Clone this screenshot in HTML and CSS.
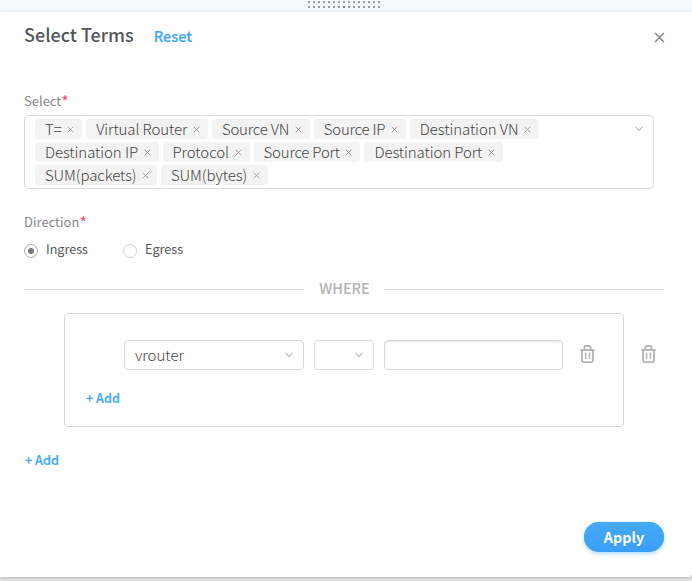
FILE: index.html
```html
<!DOCTYPE html>
<html lang="en">
<head>
<meta charset="utf-8">
<title>Select Terms</title>
<link rel="stylesheet" href="styles.css">
</head>
<body>
<svg class="defs" width="0" height="0" aria-hidden="true">
  <symbol id="x" viewBox="0 0 10 10"><path d="M1 1L9 9M9 1L1 9" fill="none" stroke="currentColor" stroke-width="1.3"/></symbol>
  <symbol id="chev" viewBox="0 0 8 6"><path d="M.7 .8L4 4.7L7.3 .8" fill="none" stroke="currentColor" stroke-width="1.1"/></symbol>
  <symbol id="trash" viewBox="0 0 15 18"><path d="M.3 5H14.7M4.5 4.6V2Q4.5 1 5.5 1H9.5Q10.5 1 10.5 2V4.6M2 5V15.3Q2 17.1 3.7 17.1H11.3Q13 17.1 13 15.3V5" fill="none" stroke="currentColor" stroke-width="1.9"/><path d="M5.6 7.5V14M9.4 7.5V14" fill="none" stroke="currentColor" stroke-width="1.5"/></symbol>
</svg>
<div class="strip"><div class="grip"></div></div>
<main class="modal">
  <header class="head">
    <h1 class="title">Select Terms</h1>
    <a class="reset">Reset</a>
    <svg class="close"><use href="#x"/></svg>
  </header>
  <label class="label select-label">Select<span class="req">*</span></label>
  <div class="multi">
    <div class="tags">
      <div class="row"><span class="tag">T=<svg><use href="#x"/></svg></span><span class="tag">Virtual Router<svg><use href="#x"/></svg></span><span class="tag tight">Source VN<svg><use href="#x"/></svg></span><span class="tag tight">Source IP<svg><use href="#x"/></svg></span><span class="tag">Destination VN<svg><use href="#x"/></svg></span></div>
      <div class="row"><span class="tag">Destination IP<svg><use href="#x"/></svg></span><span class="tag">Protocol<svg><use href="#x"/></svg></span><span class="tag tight">Source Port<svg><use href="#x"/></svg></span><span class="tag">Destination Port<svg><use href="#x"/></svg></span></div>
      <div class="row"><span class="tag">SUM(packets)<svg><use href="#x"/></svg></span><span class="tag">SUM(bytes)<svg><use href="#x"/></svg></span></div>
    </div>
    <svg class="chev"><use href="#chev"/></svg>
  </div>
  <label class="label dir-label">Direction<span class="req">*</span></label>
  <div class="radios">
    <span class="radio on"></span><span class="radio-text first">Ingress</span>
    <span class="radio"></span><span class="radio-text">Egress</span>
  </div>
  <div class="divider"><span>WHERE</span></div>
  <div class="group-line">
    <section class="group">
      <div class="fields">
        <div class="field key"><span>vrouter</span><svg class="chev"><use href="#chev"/></svg></div>
        <div class="field op"><svg class="chev"><use href="#chev"/></svg></div>
        <div class="field value"></div>
        <svg class="trash"><use href="#trash"/></svg>
      </div>
      <a class="add">+ Add</a>
    </section>
    <svg class="trash outer"><use href="#trash"/></svg>
  </div>
  <a class="add add-outer">+ Add</a>
  <footer class="foot"><button class="apply">Apply</button></footer>
</main>
</body>
</html>
```
FILE: styles.css
```css
* { box-sizing: border-box; }
body { margin: 0; width: 692px; height: 581px; overflow: hidden; background: #e7e7e7; color: #54565a; font-family: "Source Sans Pro", "Noto Sans CJK SC", "Open Sans", sans-serif; font-size: 13px; }
svg { display: block; flex: none; }
.defs { position: absolute; }
.strip { height: 12px; background: #f4faff; display: flex; justify-content: center; padding: 1px 4px 0 0; }
.grip { width: 72px; height: 8px; background: repeating-linear-gradient(90deg, #999 0 2px, transparent 2px 5px) 0 0 / 100% 2px no-repeat, repeating-linear-gradient(90deg, #999 0 2px, transparent 2px 5px) 0 5px / 100% 2px no-repeat; }
.modal { height: 565px; background: #fff; padding: 0 28px 0 24px; border-bottom-right-radius: 4px; box-shadow: 0 1px 4px rgba(0,0,0,.2); display: flex; flex-direction: column; }
.head { display: flex; align-items: center; height: 45px; flex: none; }
.title { margin: -1px 0 0; font-size: 18px; font-weight: 500; line-height: 24px; }
.reset { margin: 3px 0 0 20px; font-size: 14.5px; font-weight: 500; line-height: 20px; color: #3fa6fb; -webkit-text-stroke: .2px; }
.close { width: 11px; height: 11px; margin: 5px -1px 0 auto; color: #858585; }
.label { color: #85878b; font-size: 13px; line-height: 18px; height: 18px; flex: none; display: flex; }
.select-label { margin-top: 35px; }
.req { color: #fa4d6b; font-size: 16px; }
.multi { width: 630px; height: 74px; margin-top: 5px; border: 1px solid #d9d9d9; border-radius: 4px; padding: 3px 10px; display: flex; justify-content: space-between; flex: none; }
.row { display: flex; gap: 4px; height: 23px; }
.tag { height: 20px; padding: 0 8px 0 10px; border-radius: 4px; background: #f3f3f3; color: #444; font-size: 15px; font-weight: 300; line-height: 20px; letter-spacing: -.08px; display: flex; white-space: nowrap; }
.tight { letter-spacing: -.2px; }
.tag svg { width: 7px; height: 7px; margin: 6.5px 0 0 5.5px; color: #999; }
.chev { width: 8px; height: 6px; color: #bbb; }
.multi .chev { margin-top: 7px; }
.dir-label { margin-top: 24px; }
.radios { display: flex; align-items: center; height: 20px; margin-top: 9px; flex: none; }
.radio { width: 14px; height: 14px; border: 1px solid #d2d2d2; border-radius: 50%; margin-top: 2px; }
.radio.on { border-color: #aaa; background: radial-gradient(circle, #777a7e 0 2.7px, transparent 3.3px); }
.radio-text { margin: -2px 0 0 8px; line-height: 20px; font-size: 12.6px; }
.first { margin-right: 35px; }
.divider { display: flex; align-items: center; height: 20px; width: 640px; margin-top: 18px; color: #b2b4b5; font-size: 14.5px; font-weight: 500; line-height: 20px; flex: none; }
.divider span { width: 80px; padding-left: 1px; text-align: center; }
.divider::before, .divider::after { content: ""; height: 1px; background: #d9d9d9; flex: 1; margin-top: 2px; }
.group-line { display: flex; margin: 15px 0 0 40px; flex: none; }
.group { width: 560px; height: 114px; border: 1px solid #d9d9d9; border-radius: 4px; padding: 26px 0 0 59px; }
.fields { display: flex; gap: 10px; height: 30px; }
.field { border: 1px solid #d9d9d9; border-radius: 4px; height: 30px; display: flex; justify-content: space-between; align-items: center; padding: 0 10px; color: #444; font-size: 15px; font-weight: 300; line-height: 28px; }
.key { width: 180px; }
.op { width: 60px; justify-content: flex-end; }
.value { width: 179px; box-shadow: inset 0 1px 2px rgba(0,0,0,.1); }
.trash { width: 15px; height: 18px; color: #b7b7b7; margin: 5px 0 0 7px; }
.outer { margin: 32px 0 0 17px; }
.add { display: block; color: #3fa6fb; font-size: 12.7px; font-weight: 500; line-height: 20px; height: 20px; flex: none; -webkit-text-stroke: .2px; }
.group .add { margin: 18px 0 0 -38px; }
.add-outer { margin: 23px 0 0 1px; }
.foot { margin-top: 52px; display: flex; justify-content: flex-end; flex: none; }
.apply { width: 80px; height: 30px; border: 0; border-radius: 15px; background: linear-gradient(#46a9f5, #3a9ff6); color: #fff; font: bold 14.3px/30px "Source Sans Pro", "Noto Sans CJK SC", sans-serif; padding: 0; box-shadow: 0 2px 4px rgba(63,166,251,.4), inset 0 0 1px #168df0; }
```
